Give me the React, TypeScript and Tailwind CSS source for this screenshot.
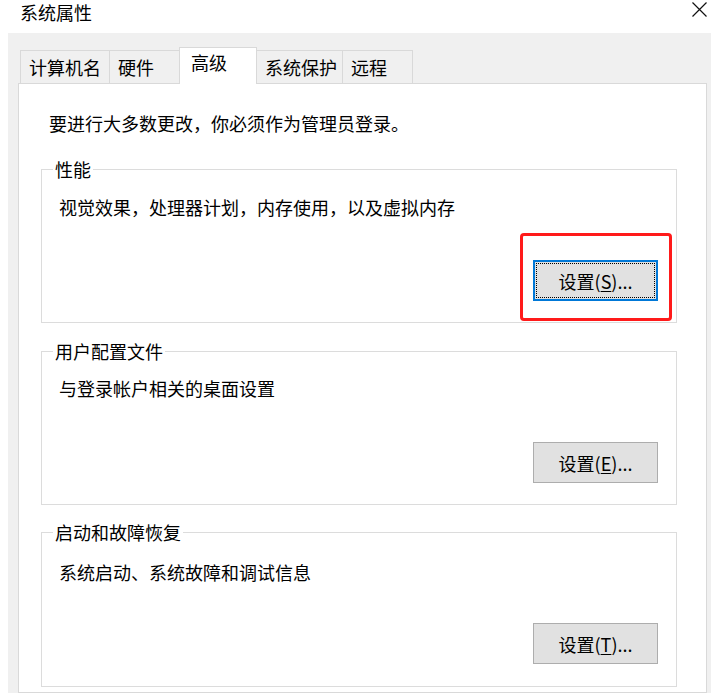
import React from "react"

const tabs = [
  { label: "计算机名", w: "w-[90px]", ml: "" },
  { label: "硬件", w: "w-[72px]", ml: "-ml-px" },
  { label: "高级", w: "w-[78px]", ml: "-ml-[2px]", active: true },
  { label: "系统保护", w: "w-[87px]", ml: "-ml-px" },
  { label: "远程", w: "w-[71px]", ml: "-ml-px" },
]

function SettingsButton({ label, hotkey, focused = false }) {
  return (
    <button
      type="button"
      className={
        focused
          ? "relative flex h-[41px] w-[125px] items-center justify-center border-2 border-[#0078d7] bg-[#e1e1e1] text-[18px] leading-6 text-black"
          : "relative flex h-[41px] w-[125px] items-center justify-center border border-[#adadad] bg-[#e1e1e1] text-[18px] leading-6 text-black"
      }
    >
      {focused && <span className="pointer-events-none absolute inset-[1px] border border-dotted border-black" />}
      <span>
        {label}(<span className="underline underline-offset-2">{hotkey}</span>)...
      </span>
    </button>
  )
}

function GroupBox({ title, desc, hotkey, focused = false, descMt, btnMt, pb, highlight = false }) {
  return (
    <fieldset className={`ml-[22px] w-[636px] border border-[#dcdcdc] ${pb}`}>
      <legend className="ml-[11px] px-[2px] text-[18px] leading-6 text-black">{title}</legend>
      <div className="pr-[18px] pl-[17px]">
        <p className={`${descMt} text-[18px] leading-6 text-black`}>{desc}</p>
        <div className={`${btnMt} flex justify-end`}>
          <div className="relative">
            <SettingsButton label="设置" hotkey={hotkey} focused={focused} />
            {highlight && (
              <span className="pointer-events-none absolute -top-[27px] -right-[14px] -bottom-[20px] -left-[13px] rounded-[4px] border-[3px] border-[#ff1a1a]" />
            )}
          </div>
        </div>
      </div>
    </fieldset>
  )
}

export default function App() {
  return (
    <div
      className="relative h-[694px] w-[711px] overflow-hidden bg-white text-black"
      style={{ fontFamily: '"Noto Sans CJK SC", "Noto Sans", sans-serif' }}
    >
      {/* title bar */}
      <div className="flex h-[33px] items-start justify-between pl-[20px] pr-[4px]">
        <span className="text-[18px] leading-6">系统属性</span>
        <svg width="15" height="15" viewBox="0 0 15 15" className="mt-[2px]">
          <path d="M0.5 0.5 L14.5 14.5 M14.5 0.5 L0.5 14.5" stroke="#111" strokeWidth="1.2" fill="none" />
        </svg>
      </div>

      {/* dialog body */}
      <div className="ml-[8px] h-[660px] bg-[#f0f0f0] pt-[14px]">
        {/* tab strip */}
        <div className="flex h-[36px] items-end pl-[12px]">
          {tabs.map((t) =>
            t.active ? (
              <div
                key={t.label}
                className={`${t.w} ${t.ml} relative z-10 -mb-px flex h-[37px] items-start border border-b-0 border-[#d9d9d9] bg-white pl-[11px] pt-[2px] text-[18px] leading-6`}
              >
                {t.label}
              </div>
            ) : (
              <div
                key={t.label}
                className={`${t.w} ${t.ml} flex h-[33px] items-center border border-b-0 border-[#d9d9d9] bg-[#f0f0f0] pl-[8px] text-[18px] leading-6`}
              >
                {t.label}
              </div>
            )
          )}
        </div>

        {/* tab page */}
        <div className="ml-[10px] w-[689px] border border-[#d9d9d9] bg-white pt-[27px] pb-[5px]">
          <p className="pl-[30px] text-[18px] leading-6">要进行大多数更改，你必须作为管理员登录。</p>

          <div className="mt-[22px]">
            <GroupBox
              title="性能"
              desc="视觉效果，处理器计划，内存使用，以及虚拟内存"
              hotkey="S"
              focused
              highlight
              descMt="mt-[14px]"
              btnMt="mt-[41px]"
              pb="pb-[21px]"
            />
          </div>

          <div className="mt-[16px]">
            <GroupBox
              title="用户配置文件"
              desc="与登录帐户相关的桌面设置"
              hotkey="E"
              descMt="mt-[13px]"
              btnMt="mt-[42px]"
              pb="pb-[21px]"
            />
          </div>

          <div className="mt-[15px]">
            <GroupBox
              title="启动和故障恢复"
              desc="系统启动、系统故障和调试信息"
              hotkey="T"
              descMt="mt-[16px]"
              btnMt="mt-[39px]"
              pb="pb-[22px]"
            />
          </div>
        </div>
      </div>
    </div>
  )
}
